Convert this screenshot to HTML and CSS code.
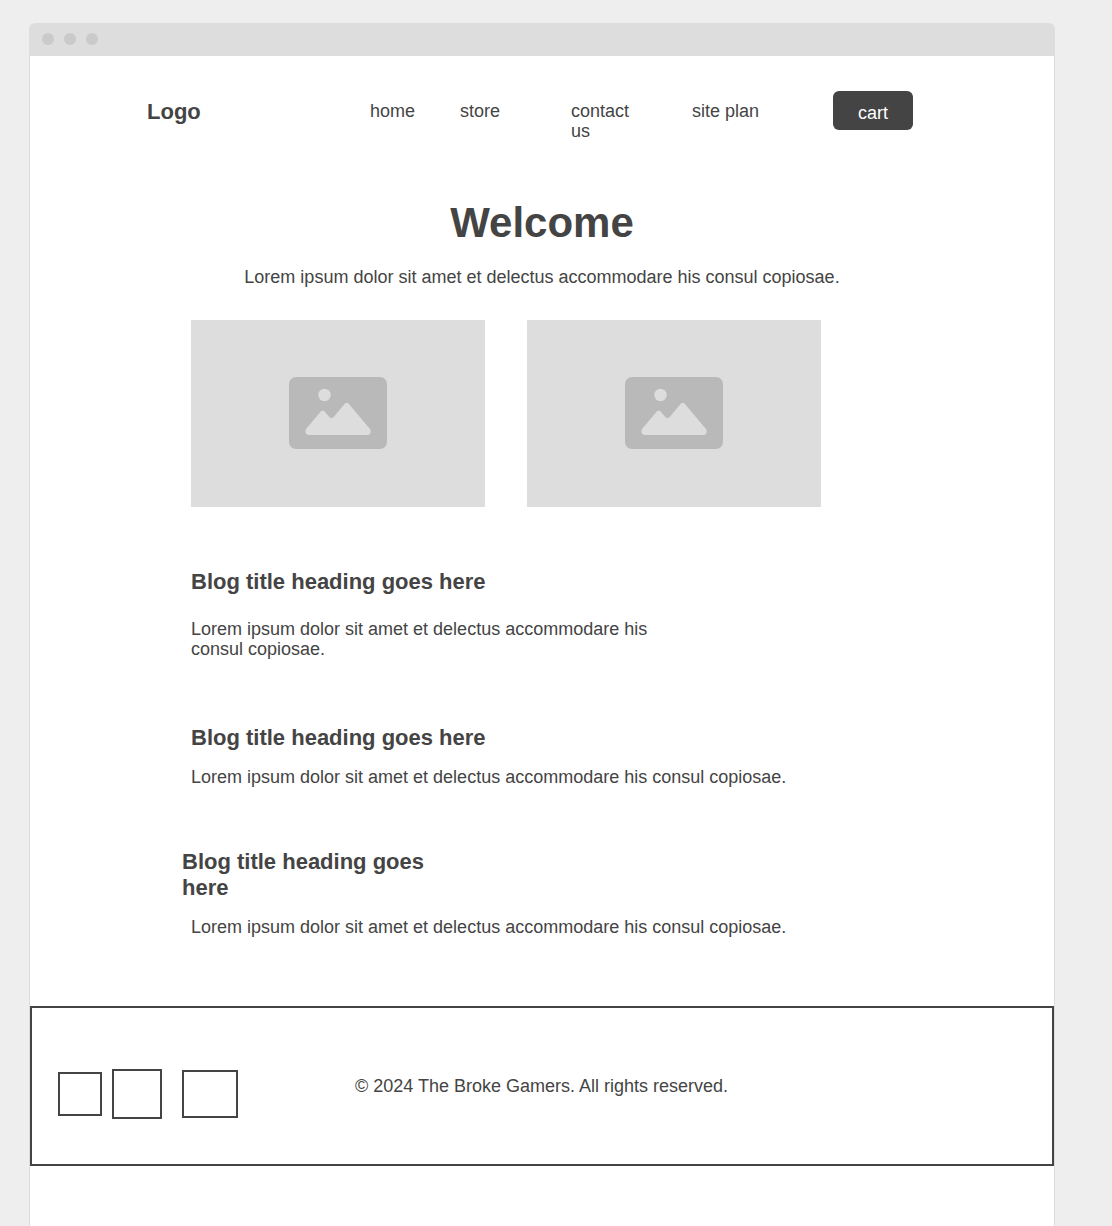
FILE: index.html
```html
<!DOCTYPE html>
<html lang="en">
<head>
  <meta charset="utf-8">
  <meta name="viewport" content="width=device-width, initial-scale=1">
  <title>The Broke Gamers</title>
  <link rel="stylesheet" href="styles.css">
</head>
<body>
  <div class="window">
    <div class="titlebar">
      <span class="dot"></span>
      <span class="dot"></span>
      <span class="dot"></span>
    </div>
    <div class="page">
      <header class="header">
        <a class="logo" href="#">Logo</a>
        <nav class="nav">
          <a class="nav-link" href="#">home</a>
          <a class="nav-link" href="#">store</a>
          <a class="nav-link nav-contact" href="#">contact us</a>
          <a class="nav-link" href="#">site plan</a>
        </nav>
        <button class="cart" type="button">cart</button>
      </header>
      <main>
        <section class="hero">
          <h1 class="welcome">Welcome</h1>
          <p class="text">Lorem ipsum dolor sit amet et delectus accommodare his consul copiosae.</p>
        </section>
        <section class="gallery">
          <div class="placeholder">
            <svg class="picture" viewBox="0 0 98 72" aria-hidden="true">
              <rect width="98" height="72" rx="7" fill="#b9b9b9"/>
              <circle cx="35.500" cy="18" r="6.200" fill="#ddd"/>
              <path d="M17 52 31.500 34.800Q33.700 32.300 35.900 34.800L40.300 40Q42.500 42 44.700 40L55.500 27Q57.700 24.500 59.900 27L81 52Q83 56 79.500 58H19.500Q15 57 17 52Z" fill="#ddd"/>
            </svg>
          </div>
          <div class="placeholder">
            <svg class="picture" viewBox="0 0 98 72" aria-hidden="true">
              <rect width="98" height="72" rx="7" fill="#b9b9b9"/>
              <circle cx="35.500" cy="18" r="6.200" fill="#ddd"/>
              <path d="M17 52 31.500 34.800Q33.700 32.300 35.900 34.800L40.300 40Q42.500 42 44.700 40L55.500 27Q57.700 24.500 59.900 27L81 52Q83 56 79.500 58H19.500Q15 57 17 52Z" fill="#ddd"/>
            </svg>
          </div>
        </section>
        <section class="blog">
          <article class="post post-lead">
            <h2 class="post-title">Blog title heading goes here</h2>
            <p class="text">Lorem ipsum dolor sit amet et delectus accommodare his consul copiosae.</p>
          </article>
          <article class="post">
            <h2 class="post-title">Blog title heading goes here</h2>
            <p class="text">Lorem ipsum dolor sit amet et delectus accommodare his consul copiosae.</p>
          </article>
          <article class="post post-last">
            <h2 class="post-title">Blog title heading goes here</h2>
            <p class="text">Lorem ipsum dolor sit amet et delectus accommodare his consul copiosae.</p>
          </article>
        </section>
      </main>
      <footer class="footer">
        <div class="badges">
          <span class="badge badge-small"></span>
          <span class="badge badge-medium"></span>
          <span class="badge badge-wide"></span>
        </div>
        <p class="text">© 2024 The Broke Gamers. All rights reserved.</p>
      </footer>
    </div>
  </div>
</body>
</html>
```
FILE: styles.css
```css
* {
  box-sizing: border-box;
}

body {
  margin: 0;
  background: #eee;
  color: #444;
  font: 18px/20px "Liberation Sans", Arial, sans-serif;
}

h1, h2, p {
  margin: 0;
}

a {
  color: inherit;
  text-decoration: none;
}

.window {
  display: flex;
  flex-direction: column;
  min-height: 100vh;
  padding: 23px 57px 0 29px;
}

.titlebar {
  display: flex;
  gap: 10px;
  height: 33px;
  padding: 10px 13px;
  border-radius: 6px 6px 0 0;
  background: #ddd;
}

.dot {
  width: 12px;
  height: 12px;
  border-radius: 50%;
  background: #cacaca;
}

.page {
  flex: 1;
  border: solid #ddd;
  border-width: 0 1px;
  background: #fff;
}

.header {
  display: grid;
  grid-template-columns: 223px 463px 80px;
  align-items: start;
  padding: 35px 0 0 117px;
}

.logo {
  padding-top: 8px;
  font-size: 22px;
  line-height: 26px;
  font-weight: bold;
}

.nav {
  display: grid;
  grid-template-columns: 90px 111px 121px 1fr;
  padding-top: 10px;
}

.nav-contact {
  width: 64px;
}

.cart {
  height: 39px;
  padding: 4px 0 0;
  border: 0;
  border-radius: 6px;
  background: #444;
  color: #fff;
  font: inherit;
}

.hero {
  display: grid;
  gap: 20px;
  padding-top: 58px;
  text-align: center;
}

.welcome {
  font-size: 42px;
  line-height: 48px;
}

.gallery {
  display: grid;
  grid-template-columns: 1fr 1fr;
  gap: 42px;
  max-width: 791px;
  padding: 33px 0 0 161px;
}

.placeholder {
  display: flex;
  justify-content: center;
  padding: 57px 0 58px;
  background: #ddd;
}

.picture {
  width: 98px;
  height: 72px;
}

.blog {
  padding: 62px 0 69px 161px;
}

.post {
  display: grid;
  gap: 16px;
  margin-bottom: 62px;
}

.post-title {
  font-size: 22px;
  line-height: 26px;
}

.post-lead {
  gap: 24px;
  max-width: 480px;
  margin-bottom: 66px;
}

.post-last {
  margin-bottom: 0;
}

.post-last .post-title {
  max-width: 270px;
  margin-left: -9px;
}

.footer {
  display: grid;
  grid-template-columns: 297px 1fr;
  align-items: center;
  height: 160px;
  padding-left: 26px;
  border: 2px solid #444;
}

.badges {
  display: flex;
  align-items: center;
  padding-top: 16px;
}

.badge {
  border: 2px solid #444;
}

.badge-small {
  width: 44px;
  height: 44px;
  margin-right: 10px;
}

.badge-medium {
  width: 50px;
  height: 50px;
  margin-right: 20px;
}

.badge-wide {
  width: 56px;
  height: 48px;
}
```
